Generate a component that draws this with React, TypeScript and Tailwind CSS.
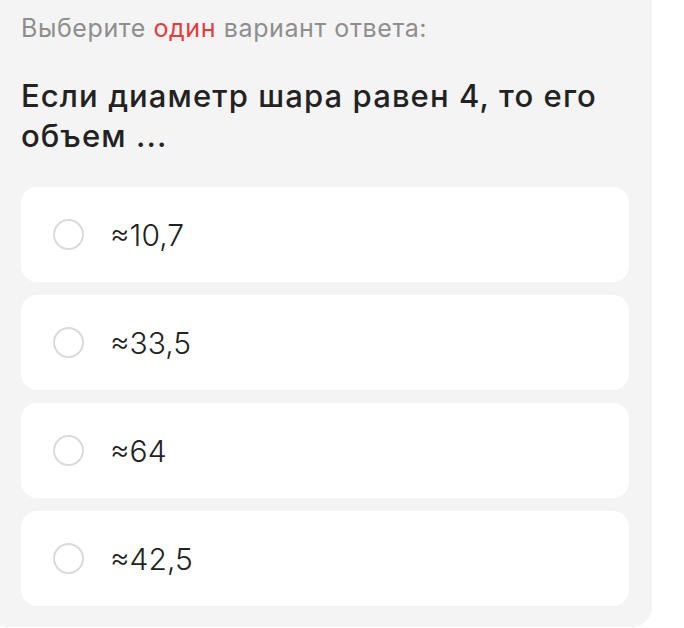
import React from "react";

const options = ["≈10,7", "≈33,5", "≈64", "≈42,5"];

export default function App() {
  return (
    <div className="h-[628px] w-[684px] overflow-hidden bg-white" style={{ fontFamily: "Inter, 'Noto Sans', sans-serif" }}>
      <div className="ml-[-12px] w-[664px] rounded-b-[20px] bg-[#f4f4f4] pb-[21px] pl-[33px] pr-[23px] pt-[12px]">
        <div className="text-[25px] leading-[32px] tracking-[0.6px] text-[#8e8e8e]">
          Выберите <span className="text-[#e53b3d]">один</span> вариант ответа:
        </div>
        <div className="mt-[32px] text-[31px] font-medium leading-[40px] tracking-[1.1px] text-[#222222]">
          Если диаметр шара равен 4, то его объем ...
        </div>
        <div className="mt-[31px] flex flex-col gap-[13px]">
          {options.map((o) => (
            <div key={o} className="flex h-[95px] items-center rounded-[16px] bg-white pl-[32px]">
              <div className="h-[31px] w-[31px] shrink-0 rounded-full border-2 border-[#dadada]" />
              <div className="ml-[26px] text-[30px] font-light leading-none text-[#222222]">{o}</div>
            </div>
          ))}
        </div>
      </div>
    </div>
  );
}
